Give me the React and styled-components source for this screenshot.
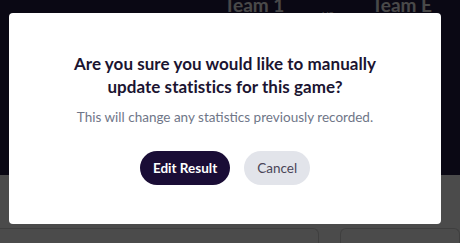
import React from 'react'
import styled, { createGlobalStyle } from 'styled-components'

const GlobalStyle = createGlobalStyle`
    html, body {
        margin: 0;
        padding: 0;
        width: 460px;
        height: 243px;
        overflow: hidden;
        font-family: "Lato", "Liberation Sans", sans-serif;
        background: #fafafa;
    }
`;

function App() {
    return (
        <>
            <GlobalStyle />
            <Page>
                <MatchHeader>
                    <MatchTitle>
                        <TeamName>Team 1</TeamName>
                        <Versus>vs</Versus>
                        <TeamName>Team E</TeamName>
                    </MatchTitle>
                </MatchHeader>
                <CardsRow>
                    <Card />
                    <Card />
                </CardsRow>
            </Page>
            <Overlay>
                <Modal role="dialog">
                    <ModalTitle>
                        Are you sure you would like to manually update statistics for this game?
                    </ModalTitle>
                    <ModalText>This will change any statistics previously recorded.</ModalText>
                    <ModalActions>
                        <Button $primary>Edit Result</Button>
                        <Button>Cancel</Button>
                    </ModalActions>
                </Modal>
            </Overlay>
        </>
    )
}

export default App

const Page = styled.div`
    display: flex;
    flex-direction: column;
    height: 243px;
`;

const MatchHeader = styled.header`
    height: 175px;
    background-color: #221b44;
    display: flex;
    justify-content: flex-end;
    align-items: flex-start;
    padding-right: 28px;
`;

const MatchTitle = styled.div`
    display: flex;
    align-items: baseline;
    gap: 38px;
    margin-top: -6px;
`;

const TeamName = styled.h2`
    margin: 0;
    font-size: 19px;
    font-weight: 700;
    color: #f3f3f3;
    line-height: 22px;
`;

const Versus = styled.span`
    font-size: 12px;
    color: #f3f3f3;
    position: relative;
    top: 6px;
`;

const CardsRow = styled.div`
    flex: 1;
    display: grid;
    grid-template-columns: 1fr 120px;
    gap: 21px;
    padding-top: 53px;
    margin-left: -10px;
`;

const Card = styled.div`
    border: 1px solid #d2d2d2;
    border-bottom: none;
    border-radius: 6px 6px 0 0;
    background: #fafafa;
`;

const Overlay = styled.div`
    position: fixed;
    inset: 0;
    background-color: rgba(0, 0, 0, 0.7);
    display: flex;
    justify-content: flex-start;
    align-items: flex-start;
`;

const Modal = styled.div`
    margin: 13px 0 0 9px;
    width: 432px;
    height: 211px;
    box-sizing: border-box;
    padding: 39px 40px;
    background: #ffffff;
    border-radius: 4px;
    display: flex;
    flex-direction: column;
    align-items: center;
    text-align: center;
`;

const ModalTitle = styled.h3`
    margin: 0;
    max-width: 310px;
    font-size: 17px;
    line-height: 23px;
    font-weight: 700;
    color: #1b1431;
    letter-spacing: 0.05px;
`;

const ModalText = styled.p`
    margin: 9px 0 0;
    font-size: 13.5px;
    line-height: 20px;
    color: #6f7688;
`;

const ModalActions = styled.div`
    display: flex;
    gap: 14px;
    margin-top: 24px;
`;

const Button = styled.button`
    height: 34px;
    padding: 0 13px;
    border: none;
    border-radius: 17px;
    font-family: inherit;
    font-size: 13.5px;
    font-weight: ${p => (p.$primary ? 700 : 400)};
    color: ${p => (p.$primary ? '#ffffff' : '#4a4658')};
    background-color: ${p => (p.$primary ? '#1a0d36' : '#e2e4ea')};
    cursor: pointer;
`;
